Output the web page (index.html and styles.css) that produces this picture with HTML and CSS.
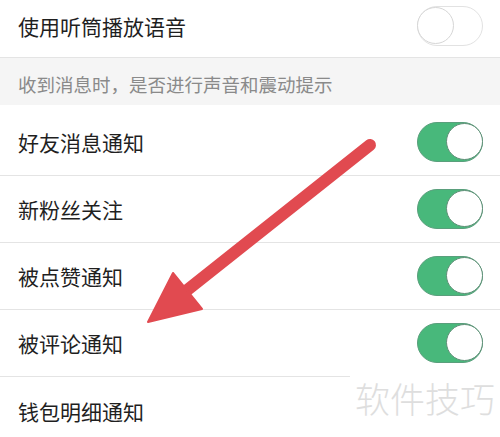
FILE: index.html
```html
<!DOCTYPE html>
<html lang="zh-CN">
<head>
    <meta charset="UTF-8">
    <title>新消息通知</title>
    <link rel="stylesheet" href="styles.css">
</head>
<body>
    <div class="page">
        <div class="row row-top">
            <span class="label">使用听筒播放语音</span>
            <span class="switch off"><span class="knob"></span></span>
        </div>
        <div class="tip">收到消息时，是否进行声音和震动提示</div>
        <div class="list">
            <div class="row">
                <span class="label">好友消息通知</span>
                <span class="switch on"><span class="knob"></span></span>
            </div>
            <div class="row">
                <span class="label">新粉丝关注</span>
                <span class="switch on"><span class="knob"></span></span>
            </div>
            <div class="row">
                <span class="label">被点赞通知</span>
                <span class="switch on"><span class="knob"></span></span>
            </div>
            <div class="row">
                <span class="label">被评论通知</span>
                <span class="switch on"><span class="knob"></span></span>
            </div>
            <div class="row row-last">
                <span class="label">钱包明细通知</span>
            </div>
        </div>

        <svg class="arrow" width="500" height="437" viewBox="0 0 500 437">
            <line x1="370" y1="145" x2="186" y2="291" stroke="#e14a50" stroke-width="12" stroke-linecap="round"/>
            <polygon points="148,322 173,273 202,309" fill="#e14a50" stroke="#e14a50" stroke-width="2" stroke-linejoin="round"/>
        </svg>
        <div class="mark">软件技巧</div>
    </div>
</body>
</html>
```

FILE: styles.css
```css
*{
    box-sizing: border-box;
}
body{
    margin:0;
    background:#fff;
    font-family:"Noto Sans CJK SC", "Noto Sans", sans-serif;
    color:#1f1f1f;
}
.page{
    position: relative;
    width:500px;
    height:437px;
    overflow:hidden;
}
.row{
    display:flex;
    align-items:center;
    justify-content:space-between;
    height:67px;
    padding:0 17px 0 18px;
    border-bottom:1px solid #e4e4e4;
}
.row-top{
    height:58px;
    padding-bottom:6px;
}
.row-last{
    border-bottom:none;
}
.label{
    font-size:21px;
    line-height:30px;
}
.tip{
    background:#f5f5f5;
    color:#8a8a8a;
    font-size:18.5px;
    line-height:24px;
    padding:14px 18px 9px;
}
.list{
    padding-top:4px;
}
.switch{
    position: relative;
    display:block;
    width:66px;
    height:40px;
    border-radius:20px;
}
.switch.off{
    background:#fff;
    border:1.5px solid #e2e2e2;
}
.switch.on{
    background:#48b87b;
    border:1.5px solid #5a9f7c;
}
.knob{
    position: absolute;
    top:0;
    width:37px;
    height:37px;
    border-radius:50%;
    background:#fff;
}
.off .knob{
    left:-1px;
    border:1.5px solid #d6d6d6;
}
.on .knob{
    right:-1px;
    border:1.5px solid #5f8f77;
}
.arrow{
    position: absolute;
    left:0;
    top:0;
}
.mark{
    position: absolute;
    left:350px;
    top:374px;
    padding:0 5px;
    background:#fff;
    color:#dedede;
    font-size:35px;
    font-weight:300;
    line-height:48px;
}
```
